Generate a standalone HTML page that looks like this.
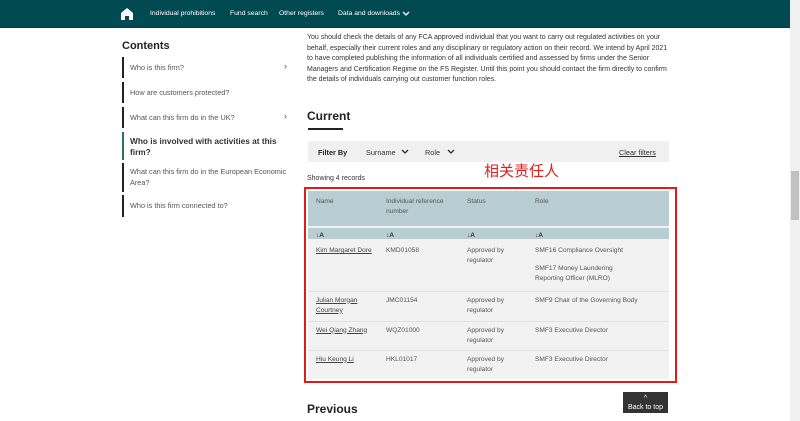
<!DOCTYPE html>
<html><head><meta charset="utf-8"><style>
*{margin:0;padding:0;box-sizing:border-box}
body{width:800px;height:421px;overflow:hidden;background:#fff;font-family:"Liberation Sans",sans-serif;color:#333;position:relative}
.a{position:absolute}
.nav{left:0;top:0;width:790px;height:28px;background:#024a52;border-bottom:1px solid #0a3a40}
.nav span{position:absolute;top:10px;color:#fff;font-size:6.8px}
.sb{left:790px;top:0;width:10px;height:421px;background:#f0f0f0}
.thumb{left:791px;top:171px;width:8px;height:49px;background:#c1c1c1}
.toc{left:122px;width:175px;font-size:7.3px;color:#555;border-left:2px solid #222;padding-left:6px}
.p{font-size:7px;line-height:10.6px;color:#333}
td{font-size:6.6px;color:#555;vertical-align:top;padding:0 4px 0 8px;line-height:10px}
a{color:#444;text-decoration:underline}
</style></head><body>
<div class="a nav">
<svg class="a" style="left:121px;top:8px" width="12" height="12" viewBox="0 0 12 12"><path d="M6 0L0 5V12H4V8H8V12H12V5Z" fill="#fff"/></svg>
<span style="left:150px">Individual prohibitions</span>
<span style="left:230px">Fund search</span>
<span style="left:279px">Other registers</span>
<span style="left:338px">Data and downloads</span>
<svg class="a" style="left:402px;top:11px" width="8" height="6" viewBox="0 0 8 6"><path d="M1 1L4 4L7 1" stroke="#fff" stroke-width="1.3" fill="none"/></svg>
</div>
<div class="a sb"></div><div class="a thumb"></div>
<div class="a" style="left:122px;top:40px;font-size:11px;font-weight:bold;color:#222">Contents</div>
<div class="a toc" style="top:57px;height:21px;padding-top:6px">Who is this firm?<span class="a" style="left:160px;top:4px;font-size:9px">›</span></div>
<div class="a toc" style="top:82px;height:21px;padding-top:6px">How are customers protected?</div>
<div class="a toc" style="top:107px;height:21px;padding-top:6px">What can this firm do in the UK?<span class="a" style="left:160px;top:4px;font-size:9px">›</span></div>
<div class="a toc" style="top:132px;height:28px;padding-top:4px;border-left-color:#2b6f6b;font-weight:bold;color:#333;font-size:8.3px;line-height:11px;width:160px">Who is involved with activities at this firm?</div>
<div class="a toc" style="top:163px;height:29px;padding-top:4px;line-height:10.5px;width:165px">What can this firm do in the European Economic Area?</div>
<div class="a toc" style="top:195px;height:22px;padding-top:6px">Who is this firm connected to?</div>
<div class="a p" style="left:307px;top:33px;width:362px">You should check the details of any FCA approved individual that you want to carry out regulated activities on your behalf, especially their current roles and any disciplinary or regulatory action on their record. We intend by April 2021 to have completed publishing the information of all individuals certified and assessed by firms under the Senior Managers and Certification Regime on the FS Register. Until this point you should contact the firm directly to confirm the details of individuals carrying out customer function roles.</div>
<div class="a" style="left:307px;top:109px;font-size:12px;font-weight:bold;color:#222">Current</div>
<div class="a" style="left:308px;top:128px;width:35px;height:2px;background:#222"></div>
<div class="a" style="left:308px;top:141px;width:361px;height:21px;background:#f0f0f0;font-size:7.3px">
<b class="a" style="left:10px;top:7px;color:#222">Filter By</b>
<span class="a" style="left:58px;top:7px">Surname</span>
<svg class="a" style="left:93px;top:8px" width="8" height="6" viewBox="0 0 8 6"><path d="M1 1L4 4L7 1" stroke="#333" stroke-width="1.3" fill="none"/></svg>
<span class="a" style="left:117px;top:7px">Role</span>
<svg class="a" style="left:139px;top:8px" width="8" height="6" viewBox="0 0 8 6"><path d="M1 1L4 4L7 1" stroke="#333" stroke-width="1.3" fill="none"/></svg>
<span class="a" style="left:311px;top:7px;text-decoration:underline">Clear filters</span></div>
<div class="a" style="left:307px;top:175px;font-size:7px">Showing 4 records</div>
<div class="a" style="left:484px;top:160px;font-size:15px;color:#e02020;font-family:'Noto Sans CJK SC',sans-serif">相关责任人</div>
<div class="a" style="left:304px;top:187px;width:373px;height:196px;border:2px solid #e21a1a"></div>
<div class="a" style="left:308px;top:191px;width:361px;height:188px;background:#f2f2f2"></div>
<div class="a" style="left:308px;top:191px;width:361px;height:35px;background:#b9ced2"></div>
<div class="a" style="left:308px;top:228px;width:361px;height:11px;background:#b9ced2"></div>
<table class="a" style="left:308px;top:197px;width:361px;border-collapse:collapse">
<tr style="height:31px"><td style="width:70px">Name</td><td style="width:81px">Individual reference number</td><td style="width:68px">Status</td><td style="padding-right:30px">Role</td></tr>
<tr style="height:14px"><td style="padding-top:3px;font-weight:bold;color:#333">↓A</td><td style="padding-top:3px;font-weight:bold;color:#333">↓A</td><td style="padding-top:3px;font-weight:bold;color:#333">↓A</td><td style="padding-top:3px;font-weight:bold;color:#333">↓A</td></tr>
<tr style="height:49px;border-bottom:1px solid #e2e2e2"><td style="padding-top:4px"><a>Kim Margaret Dore</a></td><td style="padding-top:4px">KMD01058</td><td style="padding-top:4px">Approved by regulator</td><td style="padding-top:4px;padding-right:30px">SMF16 Compliance Oversight<br><div style="height:8px"></div>SMF17 Money Laundering Reporting Officer (MLRO)</td></tr>
<tr style="height:30px;border-bottom:1px solid #e2e2e2"><td style="padding-top:4px"><a>Julian Morgan Courtney</a></td><td style="padding-top:4px">JMC01154</td><td style="padding-top:4px">Approved by regulator</td><td style="padding-top:4px">SMF9 Chair of the Governing Body</td></tr>
<tr style="height:29px;border-bottom:1px solid #e2e2e2"><td style="padding-top:4px"><a>Wei Qiang Zhang</a></td><td style="padding-top:4px">WQZ01000</td><td style="padding-top:4px">Approved by regulator</td><td style="padding-top:4px">SMF3 Executive Director</td></tr>
<tr style="height:30px"><td style="padding-top:4px"><a>Hiu Keung Li</a></td><td style="padding-top:4px">HKL01017</td><td style="padding-top:4px">Approved by regulator</td><td style="padding-top:4px">SMF3 Executive Director</td></tr>
</table>
<div class="a" style="left:307px;top:402px;font-size:12px;font-weight:bold;color:#222">Previous</div>
<div class="a" style="left:623px;top:392px;width:45px;height:21px;background:#333;color:#fff;font-size:7px;text-align:center;line-height:9px;padding-top:2px">^<br>Back to top</div>
</body></html>
